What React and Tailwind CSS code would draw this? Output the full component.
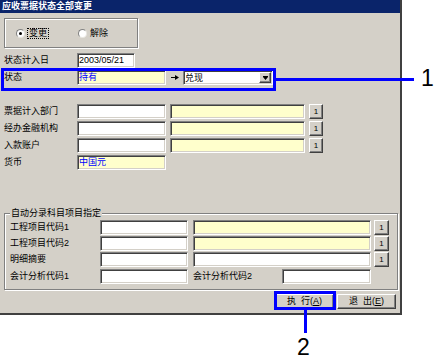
import React from "react";

const sunken =
  "border border-t-[#808080] border-l-[#808080] border-b-white border-r-white shadow-[inset_1px_1px_0_#404040,inset_-1px_-1px_0_#d4d0c8]";
const raised =
  "border border-t-white border-l-white border-b-[#404040] border-r-[#404040] shadow-[inset_-1px_-1px_0_#808080] bg-[#d4d0c8]";

function Field({ w, yellow, blue, children }) {
  return (
    <div
      className={`${sunken} ${w} h-[15px] shrink-0 ${yellow ? "bg-[#ffffcc]" : "bg-white"} ${blue ? "text-[#0000ff]" : "text-black"} pl-[1px] leading-[12px] overflow-hidden whitespace-nowrap`}
    >
      {children}
    </div>
  );
}

function SmallBtn({ w }) {
  return (
    <div className={`${raised} ${w} h-[15px] shrink-0 flex items-center justify-center text-[8px] leading-none`}>
      1
    </div>
  );
}

function Label({ w, children }) {
  return <div className={`${w} shrink-0 leading-[15px] whitespace-nowrap`}>{children}</div>;
}

function Radio({ checked }) {
  return (
    <div className="w-[9px] h-[9px] rounded-full bg-white border border-t-[#808080] border-l-[#808080] border-b-[#e8e6e0] border-r-[#e8e6e0] flex items-center justify-center shrink-0">
      {checked && <div className="w-[3px] h-[3px] rounded-full bg-black" />}
    </div>
  );
}

export default function App() {
  return (
    <div className="relative w-[435px] h-[363px] bg-white overflow-hidden font-['Liberation_Sans','Noto_Sans_CJK_SC',sans-serif] text-[9px] text-black">
      <div className="w-[402px] h-[315px] bg-[#d4d0c8] border-r-2 border-b-2 border-[#404040] flex flex-col">
        {/* title */}
        <div className="h-[13px] bg-[#0a246a] text-white font-bold pl-[2px] leading-[13px] whitespace-nowrap">
          应收票据状态全部变更
        </div>

        {/* radio group */}
        <div className="mt-[5px] ml-[4px] w-[134px] h-[30px] border border-[#808080] shadow-[inset_1px_1px_0_#fff,1px_1px_0_#fff] flex items-center">
          <div className="w-[73px] pl-[11px] flex items-center">
            <Radio checked />
            <span className="ml-[2px] border border-dotted border-black px-[1px] leading-[9px]">变更</span>
          </div>
          <div className="flex items-center">
            <Radio />
            <span className="ml-[3px] leading-[9px]">解除</span>
          </div>
        </div>

        {/* date row */}
        <div className="mt-[5px] ml-[4px] flex items-center h-[15px]">
          <Label w="w-[73px]">状态计入日</Label>
          <Field w="w-[58px]">2003/05/21</Field>
        </div>

        {/* status row */}
        <div className="mt-[2px] ml-[4px] flex items-center h-[15px]">
          <Label w="w-[73px]">状态</Label>
          <Field w="w-[89px]" yellow blue>
            持有
          </Field>
          <div className="w-[17px] flex items-center justify-center shrink-0">
            <svg width="8" height="5" viewBox="0 0 8 5">
              <path d="M0 2.5H5" stroke="#000" strokeWidth="1" />
              <path d="M4 0L8 2.5L4 5Z" fill="#000" />
            </svg>
          </div>
          <div className={`${sunken} w-[90px] h-[15px] bg-white flex items-center justify-between pl-[1px] pr-[1px] shrink-0`}>
            <span className="leading-[12px]">兑现</span>
            <div className={`${raised} w-[12px] h-[11px] flex items-center justify-center`}>
              <svg width="5" height="4" viewBox="0 0 5 4">
                <path d="M0 0H5V1H0Z M0 1H5L2.5 4Z" fill="#000" />
              </svg>
            </div>
          </div>
        </div>

        {/* section rows */}
        <div className="mt-[19px] ml-[4px] flex flex-col gap-[2px]">
          <div className="flex items-center h-[15px] gap-[4px]">
            <Label w="w-[69px]">票据计入部门</Label>
            <Field w="w-[89px]" />
            <Field w="w-[135px]" yellow />
            <SmallBtn w="w-[14px]" />
          </div>
          <div className="flex items-center h-[15px] gap-[4px]">
            <Label w="w-[69px]">经办金融机构</Label>
            <Field w="w-[89px]" />
            <Field w="w-[135px]" yellow />
            <SmallBtn w="w-[14px]" />
          </div>
          <div className="flex items-center h-[15px] gap-[4px]">
            <Label w="w-[69px]">入款账户</Label>
            <Field w="w-[89px]" />
            <Field w="w-[135px]" yellow />
            <SmallBtn w="w-[14px]" />
          </div>
          <div className="flex items-center h-[15px] gap-[4px]">
            <Label w="w-[69px]">货币</Label>
            <Field w="w-[89px]" yellow blue>
              中国元
            </Field>
          </div>
        </div>

        {/* group box */}
        <div className="relative mt-[43px] ml-[4px] w-[394px] h-[77px] border border-[#808080] shadow-[inset_1px_1px_0_#fff,1px_1px_0_#fff] pt-[6px] pl-[5px]">
          <span className="absolute left-[5px] top-[-7px] bg-[#d4d0c8] px-[1px] leading-[12px] whitespace-nowrap">
            自动分录科目项目指定
          </span>
          <div className="flex flex-col">
            <div className="flex items-center h-[15px]">
              <Label w="w-[90px]">工程项目代码1</Label>
              <Field w="w-[88px]" />
              <div className="w-[5px] shrink-0" />
              <Field w="w-[178px]" yellow />
              <div className="w-[3px] shrink-0" />
              <SmallBtn w="w-[15px]" />
            </div>
            <div className="mt-[1px] flex items-center h-[15px]">
              <Label w="w-[90px]">工程项目代码2</Label>
              <Field w="w-[88px]" />
              <div className="w-[5px] shrink-0" />
              <Field w="w-[178px]" yellow />
              <div className="w-[3px] shrink-0" />
              <SmallBtn w="w-[15px]" />
            </div>
            <div className="mt-[1px] flex items-center h-[15px]">
              <Label w="w-[90px]">明细摘要</Label>
              <Field w="w-[88px]" />
              <div className="w-[5px] shrink-0" />
              <Field w="w-[178px]" />
              <div className="w-[3px] shrink-0" />
              <SmallBtn w="w-[15px]" />
            </div>
            <div className="mt-[2px] flex items-center h-[15px]">
              <Label w="w-[90px]">会计分析代码1</Label>
              <Field w="w-[88px]" />
              <div className="w-[5px] shrink-0" />
              <Label w="w-[89px]">会计分析代码2</Label>
              <Field w="w-[89px]" />
            </div>
          </div>
        </div>

        {/* buttons */}
        <div className="mt-[4px] flex justify-end gap-[3px] pr-[4px]">
          <div className={`${raised} w-[59px] h-[15px] flex items-center justify-center leading-none whitespace-nowrap`}>
            执&nbsp;&nbsp;行(<span className="underline">A</span>)
          </div>
          <div className={`${raised} w-[59px] h-[15px] flex items-center justify-center leading-none whitespace-nowrap`}>
            退&nbsp;&nbsp;出(<span className="underline">E</span>)
          </div>
        </div>
      </div>

      {/* annotations */}
      <div className="absolute left-[1px] top-[68px] w-[275px] h-[23px] border-[3px] border-[#0000ff]" />
      <div className="absolute left-[276px] top-[78px] w-[138px] h-[3px] bg-[#0000ff]" />
      <div className="absolute left-[421px] top-[67px] text-[23px] leading-[23px] font-['Liberation_Sans',sans-serif]">1</div>

      <div className="absolute left-[274px] top-[291px] w-[62px] h-[19px] border-[3px] border-[#0000ff]" />
      <div className="absolute left-[304px] top-[310px] w-[3px] h-[23px] bg-[#0000ff]" />
      <div className="absolute left-[297px] top-[336px] text-[23px] leading-[23px] font-['Liberation_Sans',sans-serif]">2</div>
    </div>
  );
}
